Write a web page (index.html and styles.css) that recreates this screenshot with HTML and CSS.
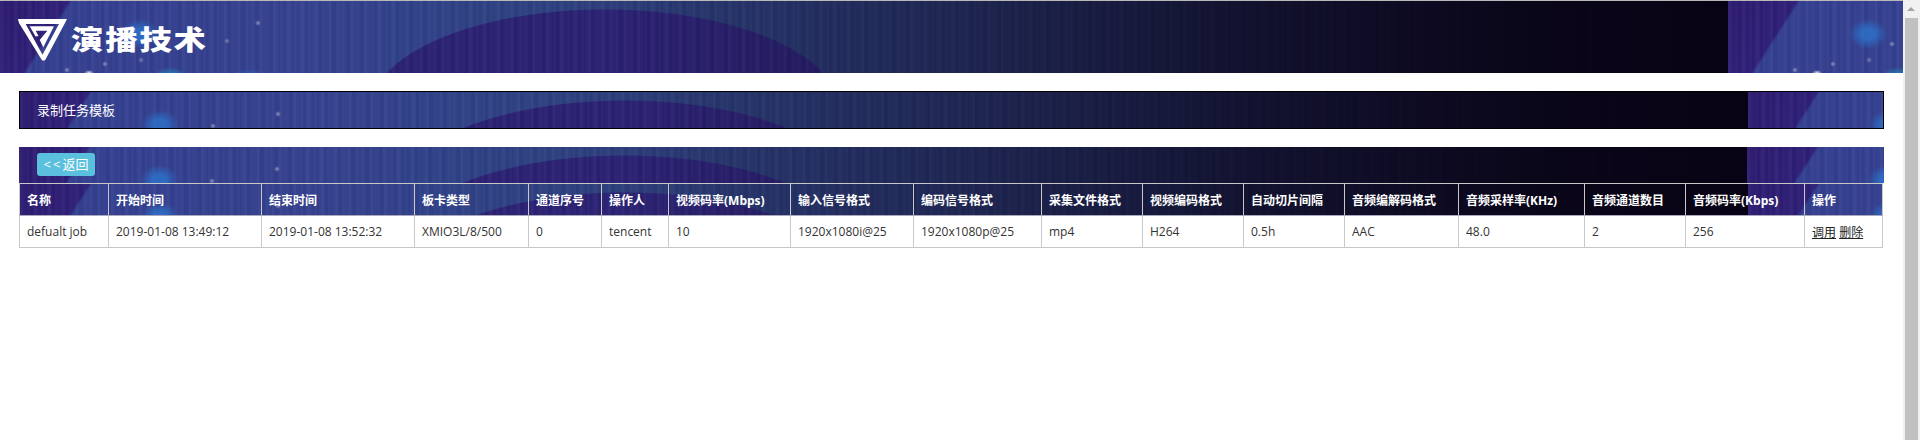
FILE: index.html
```html
<!DOCTYPE html>
<html lang="zh-CN">
<head>
<meta charset="utf-8">
<title>录制任务模板</title>
<link rel="stylesheet" href="styles.css">
</head>
<body>
<div class="shell">
  <div class="page">
    <header class="topbar art">
      <svg class="logo-mark" viewBox="0 0 50 43" width="50" height="43" aria-hidden="true">
        <path fill="#fff" fill-rule="evenodd" d="M0 0H49L47 4L27.500 40.500Q25.500 43 23.500 40.500L1 4ZM7.700 5L24.500 35.700L41 5Z"/>
        <path fill="#fff" d="M11.700 7.300H36L25.300 28.300L21.700 21L29.300 11.700H17.700L20.500 17L17.500 17.500Z"/>
      </svg>
      <span class="logo-text">演播技术</span>
    </header>
    <main class="content">
      <div class="title-bar art">录制任务模板</div>
      <div class="tool-bar art"><a class="back-btn"><span class="chev">&lt;&lt;</span>返回</a></div>
      <table class="grid">
        <colgroup>
          <col class="c1"><col class="c2"><col class="c3"><col class="c4"><col class="c5"><col class="c6"><col class="c7"><col class="c8"><col class="c9"><col class="c10"><col class="c11"><col class="c12"><col class="c13"><col class="c14"><col class="c15"><col class="c16"><col class="c17">
        </colgroup>
        <thead>
          <tr class="art">
            <th>名称</th><th>开始时间</th><th>结束时间</th><th>板卡类型</th><th>通道序号</th><th>操作人</th><th>视频码率(Mbps)</th><th>输入信号格式</th><th>编码信号格式</th><th>采集文件格式</th><th>视频编码格式</th><th>自动切片间隔</th><th>音频编解码格式</th><th>音频采样率(KHz)</th><th>音频通道数目</th><th>音频码率(Kbps)</th><th>操作</th>
          </tr>
        </thead>
        <tbody>
          <tr>
            <td>defualt job</td><td>2019-01-08 13:49:12</td><td>2019-01-08 13:52:32</td><td>XMIO3L/8/500</td><td>0</td><td>tencent</td><td>10</td><td>1920x1080i@25</td><td>1920x1080p@25</td><td>mp4</td><td>H264</td><td>0.5h</td><td>AAC</td><td>48.0</td><td>2</td><td>256</td><td><a class="act">调用</a> <a class="act">删除</a></td>
          </tr>
        </tbody>
      </table>
    </main>
  </div>
  <div class="scrollbar">
    <div class="scroll-arrow"></div>
    <div class="scroll-thumb"></div>
  </div>
</div>
</body>
</html>
```
FILE: styles.css
```css
* { box-sizing: border-box; }
html, body { margin: 0; height: 100%; overflow: hidden; background: #fff; }
body { font-family: "Open Sans", "Noto Sans CJK SC", sans-serif; font-size: 12px; color: #333; }
.shell { display: flex; height: 440px; }
.page { flex: 1; min-width: 0; }

.art {
  background-color: #1a1850;
  background-repeat: repeat-x;
  background-size: 1728px 100px;
  background-position: 0 0;
  background-image:
    radial-gradient(3px 3px at 258px 22px, rgba(225,225,240,.5), transparent),
    radial-gradient(3px 3px at 227px 40px, rgba(225,225,240,.4), transparent),
    radial-gradient(3px 3px at 193px 34px, rgba(225,225,240,.5), transparent),
    radial-gradient(3px 3px at 164px 43px, rgba(225,225,240,.5), transparent),
    radial-gradient(3px 3px at 141px 59px, rgba(225,225,240,.4), transparent),
    radial-gradient(3px 3px at 105px 63px, rgba(225,225,240,.5), transparent),
    radial-gradient(3px 3px at 67px 69px, rgba(225,225,240,.5), transparent),
    radial-gradient(5px 3px at 89px 72px, rgba(245,245,250,.9), transparent),
    radial-gradient(19px 15px at 140px 33px, rgba(45,112,200,.85) 35%, rgba(45,112,200,0)),
    radial-gradient(18px 12px at 170px 78px, rgba(30,150,190,.8) 30%, rgba(30,150,190,0)),
    radial-gradient(24px 12px at 250px 80px, rgba(45,115,205,.7) 30%, rgba(45,115,205,0)),
    linear-gradient(90deg, rgba(8,3,20,0) 600px, rgba(8,3,20,.2) 800px, rgba(8,3,20,.42) 1000px, rgba(8,3,20,.72) 1250px, rgba(8,3,20,.96) 1550px, rgba(8,3,20,1) 1728px),
    repeating-linear-gradient(90deg, rgba(255,255,255,.018) 0 3px, rgba(0,0,0,.02) 3px 7px),
    repeating-linear-gradient(90deg, rgba(255,255,255,.016) 0 6px, rgba(0,0,0,.016) 6px 13px),
    radial-gradient(235px 100px at 605px 108px, #2b2274 99%, rgba(43,34,116,0)),
    linear-gradient(122.7deg, #2e1b70 0, #2f2079 58px, rgba(47,32,121,0) 61px),
    linear-gradient(90deg, #343f92 0, #35418f 300px, #31418a 400px, #2e4080 540px, #2a3a76 700px, #2a3470 1728px);
}

.topbar {
  height: 73px;
  display: flex;
  align-items: flex-start;
  border-top: 1px solid #b9b9b9;
  padding: 18px 0 0 18px;
}
.logo-mark { flex: none; }
.logo-text {
  margin: 2px 0 0 3px;
  font-family: "Noto Sans CJK SC", sans-serif;
  font-weight: 900;
  font-size: 27px;
  line-height: 36px;
  letter-spacing: 1.500px;
  color: #fff;
  display: inline-block;
  transform: scaleX(1.2);
  transform-origin: left center;
}

.content { padding: 18px 19px 0; }
.title-bar {
  height: 38px;
  border: 1px solid #000;
  padding-left: 17px;
  font-family: "Noto Sans CJK SC", sans-serif;
  font-size: 13px;
  line-height: 36px;
  color: #fff;
}
.tool-bar {
  margin-top: 18px;
  height: 36px;
  padding: 6px 0 0 18px;
}
.back-btn {
  display: block;
  width: 58px;
  height: 23px;
  background: #5bc0de;
  border-radius: 3px;
  color: #fff;
  font-size: 13px;
  line-height: 23px;
  text-align: center;
}
.chev { letter-spacing: 2px; }

.grid { width: 1864px; table-layout: fixed; border-collapse: collapse; }
.c1 { width: 89px; } .c2 { width: 153px; } .c3 { width: 153px; } .c4 { width: 114px; }
.c5 { width: 73px; } .c6 { width: 67px; } .c7 { width: 122px; } .c8 { width: 123px; }
.c9 { width: 128px; } .c10 { width: 101px; } .c11 { width: 101px; } .c12 { width: 101px; }
.c13 { width: 114px; } .c14 { width: 126px; } .c15 { width: 101px; } .c16 { width: 119px; } .c17 { width: 78px; }
.grid th, .grid td { border: 1px solid #c8c8c8; padding: 0 7px; text-align: left; white-space: nowrap; overflow: hidden; }
.grid th { height: 32px; color: #fff; font-weight: 700; font-size: 12px; border-bottom-color: #aaa8bc; }
.grid td { height: 32px; color: #333; }
.act { color: #222; text-decoration: underline; }

.scrollbar { flex: none; width: 17px; background: #f1f1f1; display: flex; flex-direction: column; padding: 0 2px; }
.scroll-arrow { height: 18px; position: relative; }
.scroll-arrow::before { content: ""; position: absolute; left: 2px; top: 7px; border: 4.500px solid transparent; border-top: 0; border-bottom: 4.500px solid #a3a3a3; }
.scroll-thumb { flex: 1; background: #c1c1c1; }
```
